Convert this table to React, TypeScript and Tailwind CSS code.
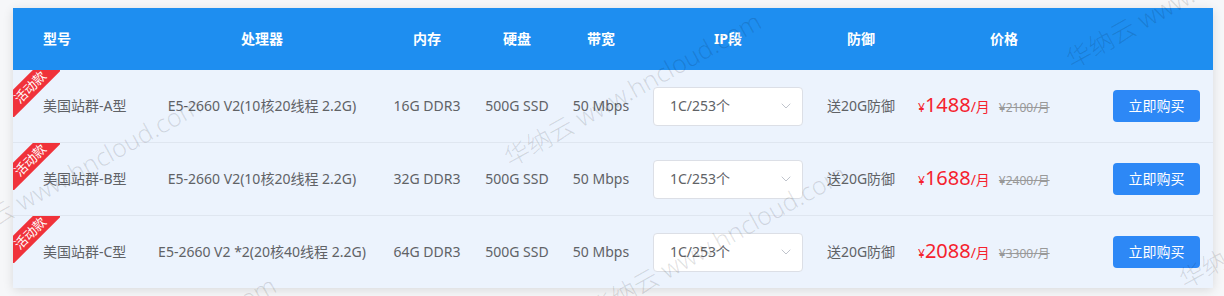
import { ChevronDown } from 'lucide-react';

const rows = [
  { name: '美国站群-A型', cpu: 'E5-2660 V2(10核20线程 2.2G)', mem: '16G DDR3', price: '1488', old: '2100' },
  { name: '美国站群-B型', cpu: 'E5-2660 V2(10核20线程 2.2G)', mem: '32G DDR3', price: '1688', old: '2400' },
  { name: '美国站群-C型', cpu: 'E5-2660 V2 *2(20核40线程 2.2G)', mem: '64G DDR3', price: '2088', old: '3300' },
];

const heads = ['型号', '处理器', '内存', '硬盘', '带宽', 'IP段', '防御', '价格', ''];

const cols = 'grid grid-cols-[137px_224px_106px_74px_94px_160px_106px_180px_119px] items-center';

// watermark start points (bottom-left of first glyph)
const marks = [
  { x: 512, y: 170 },
  { x: 1074, y: 72 },
  { x: -48, y: 254 },
  { x: 597, y: 322 },
  { x: 1187, y: 292 },
  { x: 27, y: 434 },
];

export default function App() {
  return (
    <div
      className="relative w-[1224px] h-[296px] overflow-hidden bg-[#f6f7f9] pt-2 pl-[13px]"
      style={{ fontFamily: "'Noto Sans', 'Noto Sans CJK SC', sans-serif" }}
    >
      <div className="w-[1200px] bg-white shadow-[0_2px_10px_rgba(0,0,0,0.12)]">
        {/* header */}
        <div className={`${cols} h-[62px] bg-[#1e8ef0] text-white text-sm font-bold`}>
          {heads.map((h, i) => (
            <div key={i} className={i === 0 ? 'pl-[30px]' : 'text-center'}>
              {h}
            </div>
          ))}
        </div>

        <div className="flex flex-col gap-px bg-[#dfe6f0]">
          {rows.map((r) => (
            <div key={r.name} className={`${cols} relative h-[72px] bg-[#ecf3fd] text-sm text-[#606266]`}>
              {/* 活动款 ribbon */}
              <div className="absolute top-0 left-0 w-[47px] h-[47px] overflow-hidden">
                <div className="absolute left-[-18px] top-[7px] w-[70px] h-[20px] -rotate-45 bg-[#f0323a] text-white text-[13px] leading-[20px] text-center">
                  活动款
                </div>
              </div>
              <div className="pl-[30px] whitespace-nowrap">{r.name}</div>
              <div className="text-center whitespace-nowrap">{r.cpu}</div>
              <div className="text-center">{r.mem}</div>
              <div className="text-center whitespace-nowrap">500G SSD</div>
              <div className="text-center whitespace-nowrap">50 Mbps</div>
              <div className="flex justify-center">
                <div className="flex items-center justify-between w-[150px] h-[39px] bg-white border border-[#dcdfe6] rounded pl-4 pr-2">
                  <span>1C/253个</span>
                  <ChevronDown className="w-4 h-4 text-[#c0c4cc]" strokeWidth={1.5} />
                </div>
              </div>
              <div className="text-center whitespace-nowrap">送20G防御</div>
              <div className="pl-1 flex items-baseline whitespace-nowrap text-[#f5222d]">
                <span className="text-xs">¥</span>
                <span className="text-[20px] leading-none">{r.price}</span>
                <span className="text-sm">/月</span>
                <span className="ml-[9px] text-xs text-[#999] line-through">¥{r.old}/月</span>
              </div>
              <div className="flex justify-end pr-[13px]">
                <button className="w-[87px] h-8 rounded bg-[#2d88f6] text-white text-sm">立即购买</button>
              </div>
            </div>
          ))}
        </div>
      </div>

      {marks.map((m, i) => (
        <span
          key={i}
          className="pointer-events-none absolute origin-bottom-left -rotate-[29deg] whitespace-nowrap text-[25px] leading-none font-light text-black/[0.12]"
          style={{ left: m.x, top: m.y - 25 }}
        >
          华纳云 www.hncloud.com
        </span>
      ))}
    </div>
  );
}
